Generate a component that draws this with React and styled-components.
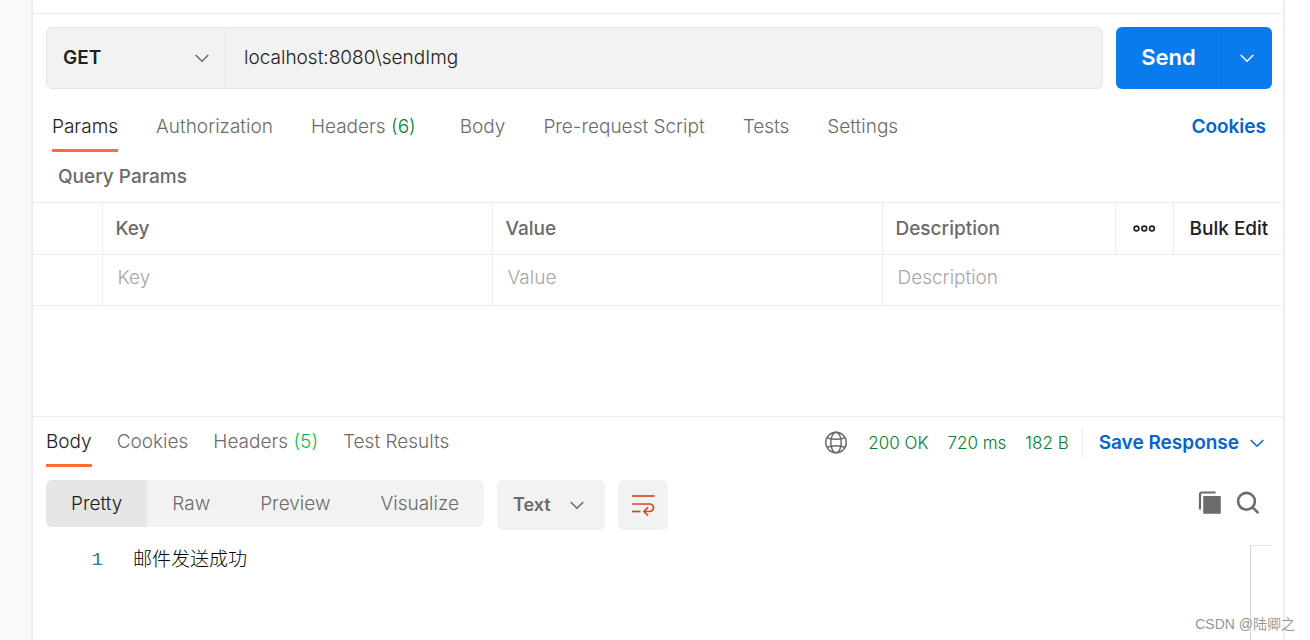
import { useState } from "react";
import styled, { createGlobalStyle, css } from "styled-components";

const GlobalStyle = createGlobalStyle`
  * {
    box-sizing: border-box;
  }

  body {
    margin: 0;
    background-color: #ffffff;
    color: #212121;
    font-family: Inter, "Noto Sans CJK SC", sans-serif;
    font-size: 19px;
    font-weight: 350;
    line-height: 24px;
  }

  button,
  input,
  select {
    margin: 0;
    padding: 0;
    border: none;
    border-radius: 0;
    background: none;
    color: inherit;
    font: inherit;
    outline: none;
  }

  button,
  select {
    cursor: pointer;
  }
`;

const Page = styled.div`
  position: relative;
  display: flex;
  min-height: 100vh;
  padding-right: 25px;
`;

const Sidebar = styled.aside`
  flex: 0 0 31px;
  background-color: #f9f9f9;
`;

const Workspace = styled.main`
  flex: 1;
  min-width: 0;
  display: flex;
  flex-direction: column;
  border-left: 2px solid #ededed;
  border-right: 2px solid #ededed;
`;

const TopEdge = styled.div`
  height: 14px;
  border-bottom: 1px solid #ededed;
`;

const RequestBar = styled.form`
  display: flex;
  gap: 13px;
  padding: 13px 11px 0 13px;
`;

const UrlBox = styled.div`
  flex: 1;
  min-width: 0;
  display: flex;
  height: 62px;
  border: 1px solid #e6e6e6;
  border-radius: 6px;
  background-color: #f2f2f2;
`;

const SelectWrap = styled.div`
  position: relative;
  display: flex;
  align-items: center;
  width: ${({ $width }) => $width};
  height: ${({ $height }) => $height};
  border-radius: 6px;
  background-color: #f2f2f2;

  svg {
    position: absolute;
    right: ${({ $iconRight }) => $iconRight};
    pointer-events: none;
  }
`;

const Select = styled.select`
  width: 100%;
  height: 100%;
  padding-left: 16px;
  appearance: none;
  color: ${({ $color }) => $color};
  font-size: ${({ $size }) => $size};
  font-weight: 600;
`;

const UrlInput = styled.input`
  flex: 1;
  min-width: 0;
  padding: 0 18px;
  border-left: 1px solid #e6e6e6;
`;

const SendGroup = styled.div`
  display: flex;
  width: 156px;
  height: 62px;
  border-radius: 6px;
  background-color: #097bed;
  color: #ffffff;
  overflow: hidden;
`;

const SendBtn = styled.button`
  flex: 1;
  padding-bottom: 2px;
  font-size: 22px;
  font-weight: 600;
`;

const SendMoreBtn = styled.button`
  display: flex;
  justify-content: center;
  align-items: center;
  width: 51px;
  border-left: 1px solid #076fd6;
`;

const RequestTabs = styled.nav`
  display: flex;
  align-items: flex-start;
  gap: 38px;
  padding: 26px 17px 0 19px;
`;

const ResponseTabs = styled.nav`
  display: flex;
  gap: 25px;
`;

const Tab = styled.button`
  height: 37px;
  padding-bottom: 10px;
  border-bottom: 3px solid transparent;
  color: #6b6b6b;
  white-space: nowrap;

  ${({ $active }) =>
    $active &&
    css`
      border-bottom-color: #ff6c37;
      color: #212121;
    `}
`;

const Count = styled.span`
  margin-right: ${({ $spaced }) => ($spaced ? "6px" : "0")};
  color: ${({ $color }) => $color};
`;

const CookiesLink = styled.a`
  margin-left: auto;
  color: #0265d2;
  font-weight: 600;
  text-decoration: none;
`;

const SectionTitle = styled.h2`
  margin: 0;
  padding: 13px 25px;
  color: #6b6b6b;
  font-size: 19px;
  font-weight: 550;
  line-height: 24px;
`;

const ParamsTable = styled.table`
  width: 100%;
  table-layout: fixed;
  border-collapse: collapse;
  border-top: 1px solid #ededed;

  tr {
    border-bottom: 1px solid #ededed;
  }

  th,
  td {
    padding: 0;
    border-left: 1px solid #ededed;
    text-align: left;
  }

  th:first-child,
  td:first-child {
    border-left: none;
  }

  th {
    height: 52px;
    padding-left: 13px;
    color: #6b6b6b;
    font-weight: 550;
  }

  td {
    height: 51px;
    vertical-align: top;
  }
`;

const CellInput = styled.input`
  width: 100%;
  height: 44px;
  padding: 0 15px;

  &::placeholder {
    color: #a6a6a6;
    opacity: 1;
  }
`;

const HeadBtn = styled.button`
  display: flex;
  align-items: center;
  margin-left: 3px;
  color: #212121;
  font-weight: 550;
  white-space: nowrap;
`;

const Response = styled.section`
  flex: 1;
  display: flex;
  flex-direction: column;
  margin-top: 110px;
  border-top: 1px solid #ededed;
`;

const ResponseHeader = styled.header`
  display: flex;
  justify-content: space-between;
  align-items: flex-start;
  padding: 13px 19px 0 13px;
`;

const ResponseMeta = styled.div`
  display: flex;
  align-items: center;
  gap: 19px;
  height: 26px;
  color: #007f31;
  font-size: 17px;
  white-space: nowrap;
`;

const SaveBtn = styled.button`
  display: flex;
  align-items: center;
  gap: 11px;
  height: 30px;
  margin-left: -6px;
  padding-left: 16px;
  border-left: 1px solid #ededed;
  color: #0265d2;
  font-size: 19px;
  font-weight: 600;
`;

const ViewBar = styled.div`
  display: flex;
  align-items: flex-start;
  gap: 13px;
  padding: 13px 23px 0 13px;
`;

const ViewModes = styled.div`
  display: flex;
  height: 47px;
  border-radius: 6px;
  background-color: #f2f2f2;
  overflow: hidden;
`;

const ViewMode = styled.button`
  padding: 0 25px;
  background-color: ${({ $active }) => ($active ? "#e6e6e6" : "transparent")};
  color: ${({ $active }) => ($active ? "#212121" : "#6b6b6b")};
`;

const WrapBtn = styled.button`
  display: flex;
  justify-content: center;
  align-items: center;
  width: 50px;
  height: 50px;
  border-radius: 6px;
  background-color: #f2f2f2;
`;

const ViewActions = styled.div`
  display: flex;
  gap: 14px;
  margin-left: auto;
  padding-top: 11px;
`;

const IconBtn = styled.button`
  display: flex;
`;

const Editor = styled.div`
  flex: 1;
  display: flex;
  padding: 15px 11px 0 13px;
`;

const LineNumber = styled.span`
  width: 57px;
  padding-top: 3px;
  color: #237893;
  font-family: "Liberation Mono", monospace;
  text-align: right;
`;

const Code = styled.code`
  flex: 1;
  padding: 4px 0 0 30px;
  color: #000000;
  font-family: "Liberation Mono", "Noto Sans CJK SC", monospace;
  font-weight: 300;
`;

const Minimap = styled.div`
  width: 22px;
  border-top: 1px solid #e4e4e4;
  border-left: 1px solid #d4d4d4;
`;

const Watermark = styled.div`
  position: absolute;
  right: 15px;
  bottom: 4px;
  color: #949494;
  font-family: "Liberation Sans", "Noto Sans CJK SC", sans-serif;
  font-size: 14px;
  line-height: 24px;
`;

const Chevron = ({ color }) => (
  <svg width="14" height="9" viewBox="0 0 14 9" fill="none" aria-hidden="true">
    <path d="M0.7 1 L7 7.3 L13.3 1" stroke={color} strokeWidth="1.5" />
  </svg>
);

const MoreIcon = () => (
  <svg width="24" height="8" viewBox="0 0 24 8" fill="none" aria-hidden="true">
    <g stroke="#212121" strokeWidth="1.6">
      <circle cx="4.5" cy="3.5" r="2.4" />
      <circle cx="12.3" cy="3.5" r="2.4" />
      <circle cx="20" cy="3.5" r="2.4" />
    </g>
  </svg>
);

const GlobeIcon = () => (
  <svg width="24" height="24" viewBox="0 0 24 24" fill="none" aria-hidden="true">
    <g stroke="#6b6b6b" strokeWidth="1.5">
      <circle cx="11" cy="11.5" r="10.3" />
      <ellipse cx="11" cy="11.5" rx="5.2" ry="10.3" />
      <path d="M2 6.7 C7 8.9 15 8.9 20 6.7" />
      <path d="M2 16.3 C7 14.1 15 14.1 20 16.3" />
    </g>
  </svg>
);

const WrapIcon = () => (
  <svg width="24" height="22" viewBox="0 0 24 22" fill="none" aria-hidden="true">
    <g stroke="#d6481c" strokeWidth="1.7">
      <path d="M1 2 H23.5" />
      <path d="M1 10 H18.7 A3.75 3.75 0 0 1 18.7 17.5 H13" />
      <path d="M1 17.5 H9.5" />
      <path d="M17 13.4 L12.9 17.5 L17 21.6" />
    </g>
  </svg>
);

const CopyIcon = () => (
  <svg width="24" height="24" viewBox="0 0 24 24" aria-hidden="true">
    <path
      d="M2 18.5 V3.2 A1.7 1.7 0 0 1 3.7 1.5 H17.5"
      fill="none"
      stroke="#6b6b6b"
      strokeWidth="2.2"
    />
    <rect x="5.2" y="5" width="17.6" height="17.8" rx="1" fill="#6b6b6b" />
  </svg>
);

const SearchIcon = () => (
  <svg width="24" height="24" viewBox="0 0 24 24" fill="none" aria-hidden="true">
    <g stroke="#6b6b6b" strokeWidth="2.6">
      <circle cx="10.5" cy="10.3" r="8.4" />
      <path d="M16.4 16.2 L22.4 22.2" />
    </g>
  </svg>
);

const requestTabs = [
  { name: "Params" },
  { name: "Authorization" },
  { name: "Headers", count: 6 },
  { name: "Body" },
  { name: "Pre-request Script" },
  { name: "Tests" },
  { name: "Settings" },
];

const responseTabs = [
  { name: "Body" },
  { name: "Cookies" },
  { name: "Headers", count: 5 },
  { name: "Test Results" },
];

const viewModes = ["Pretty", "Raw", "Preview", "Visualize"];

const App = () => {
  const [url, setUrl] = useState("localhost:8080\\sendImg");
  const [requestTab, setRequestTab] = useState("Params");
  const [responseTab, setResponseTab] = useState("Body");
  const [viewMode, setViewMode] = useState("Pretty");

  return (
    <>
      <GlobalStyle />
      <Page>
        <Sidebar />
        <Workspace>
          <TopEdge />
          <RequestBar onSubmit={(e) => e.preventDefault()}>
            <UrlBox>
              <SelectWrap $width="178px" $height="60px" $iconRight="16px">
                <Select aria-label="Method" $color="#212121" $size="19px">
                  <option>GET</option>
                  <option>POST</option>
                </Select>
                <Chevron color="#6b6b6b" />
              </SelectWrap>
              <UrlInput
                type="text"
                aria-label="Request URL"
                value={url}
                onChange={(e) => setUrl(e.target.value)}
              />
            </UrlBox>
            <SendGroup>
              <SendBtn type="submit">Send</SendBtn>
              <SendMoreBtn type="button" aria-label="Send options">
                <Chevron color="#ffffff" />
              </SendMoreBtn>
            </SendGroup>
          </RequestBar>

          <RequestTabs>
            {requestTabs.map(({ name, count }) => (
              <Tab
                key={name}
                $active={name === requestTab}
                onClick={() => setRequestTab(name)}
              >
                {name}{" "}
                {count && (
                  <Count $color="#007f31" $spaced>
                    ({count})
                  </Count>
                )}
              </Tab>
            ))}
            <CookiesLink href="#cookies">Cookies</CookiesLink>
          </RequestTabs>

          <SectionTitle>Query Params</SectionTitle>
          <ParamsTable>
            <colgroup>
              <col style={{ width: 69 }} />
              <col />
              <col />
              <col style={{ width: 233 }} />
              <col style={{ width: 58 }} />
              <col style={{ width: 110 }} />
            </colgroup>
            <thead>
              <tr>
                <th />
                <th>Key</th>
                <th>Value</th>
                <th>Description</th>
                <th>
                  <HeadBtn aria-label="More options">
                    <MoreIcon />
                  </HeadBtn>
                </th>
                <th>
                  <HeadBtn>Bulk Edit</HeadBtn>
                </th>
              </tr>
            </thead>
            <tbody>
              <tr>
                <td />
                <td>
                  <CellInput aria-label="Key" placeholder="Key" />
                </td>
                <td>
                  <CellInput aria-label="Value" placeholder="Value" />
                </td>
                <td colSpan={3}>
                  <CellInput aria-label="Description" placeholder="Description" />
                </td>
              </tr>
            </tbody>
          </ParamsTable>

          <Response>
            <ResponseHeader>
              <ResponseTabs>
                {responseTabs.map(({ name, count }) => (
                  <Tab
                    key={name}
                    $active={name === responseTab}
                    onClick={() => setResponseTab(name)}
                  >
                    {name} {count && <Count $color="#0cbb52">({count})</Count>}
                  </Tab>
                ))}
              </ResponseTabs>
              <ResponseMeta>
                <GlobeIcon />
                <span>200 OK</span>
                <span>720 ms</span>
                <span>182 B</span>
                <SaveBtn>
                  Save Response
                  <Chevron color="#0265d2" />
                </SaveBtn>
              </ResponseMeta>
            </ResponseHeader>

            <ViewBar>
              <ViewModes>
                {viewModes.map((mode) => (
                  <ViewMode
                    key={mode}
                    $active={mode === viewMode}
                    onClick={() => setViewMode(mode)}
                  >
                    {mode}
                  </ViewMode>
                ))}
              </ViewModes>
              <SelectWrap $width="108px" $height="50px" $iconRight="21px">
                <Select aria-label="Format" $color="#6b6b6b" $size="18px">
                  <option>Text</option>
                  <option>JSON</option>
                </Select>
                <Chevron color="#6b6b6b" />
              </SelectWrap>
              <WrapBtn aria-label="Wrap lines">
                <WrapIcon />
              </WrapBtn>
              <ViewActions>
                <IconBtn aria-label="Copy">
                  <CopyIcon />
                </IconBtn>
                <IconBtn aria-label="Search">
                  <SearchIcon />
                </IconBtn>
              </ViewActions>
            </ViewBar>

            <Editor>
              <LineNumber>1</LineNumber>
              <Code>邮件发送成功</Code>
              <Minimap />
            </Editor>
          </Response>
        </Workspace>
        <Watermark>CSDN @陆卿之</Watermark>
      </Page>
    </>
  );
};

export default App;
